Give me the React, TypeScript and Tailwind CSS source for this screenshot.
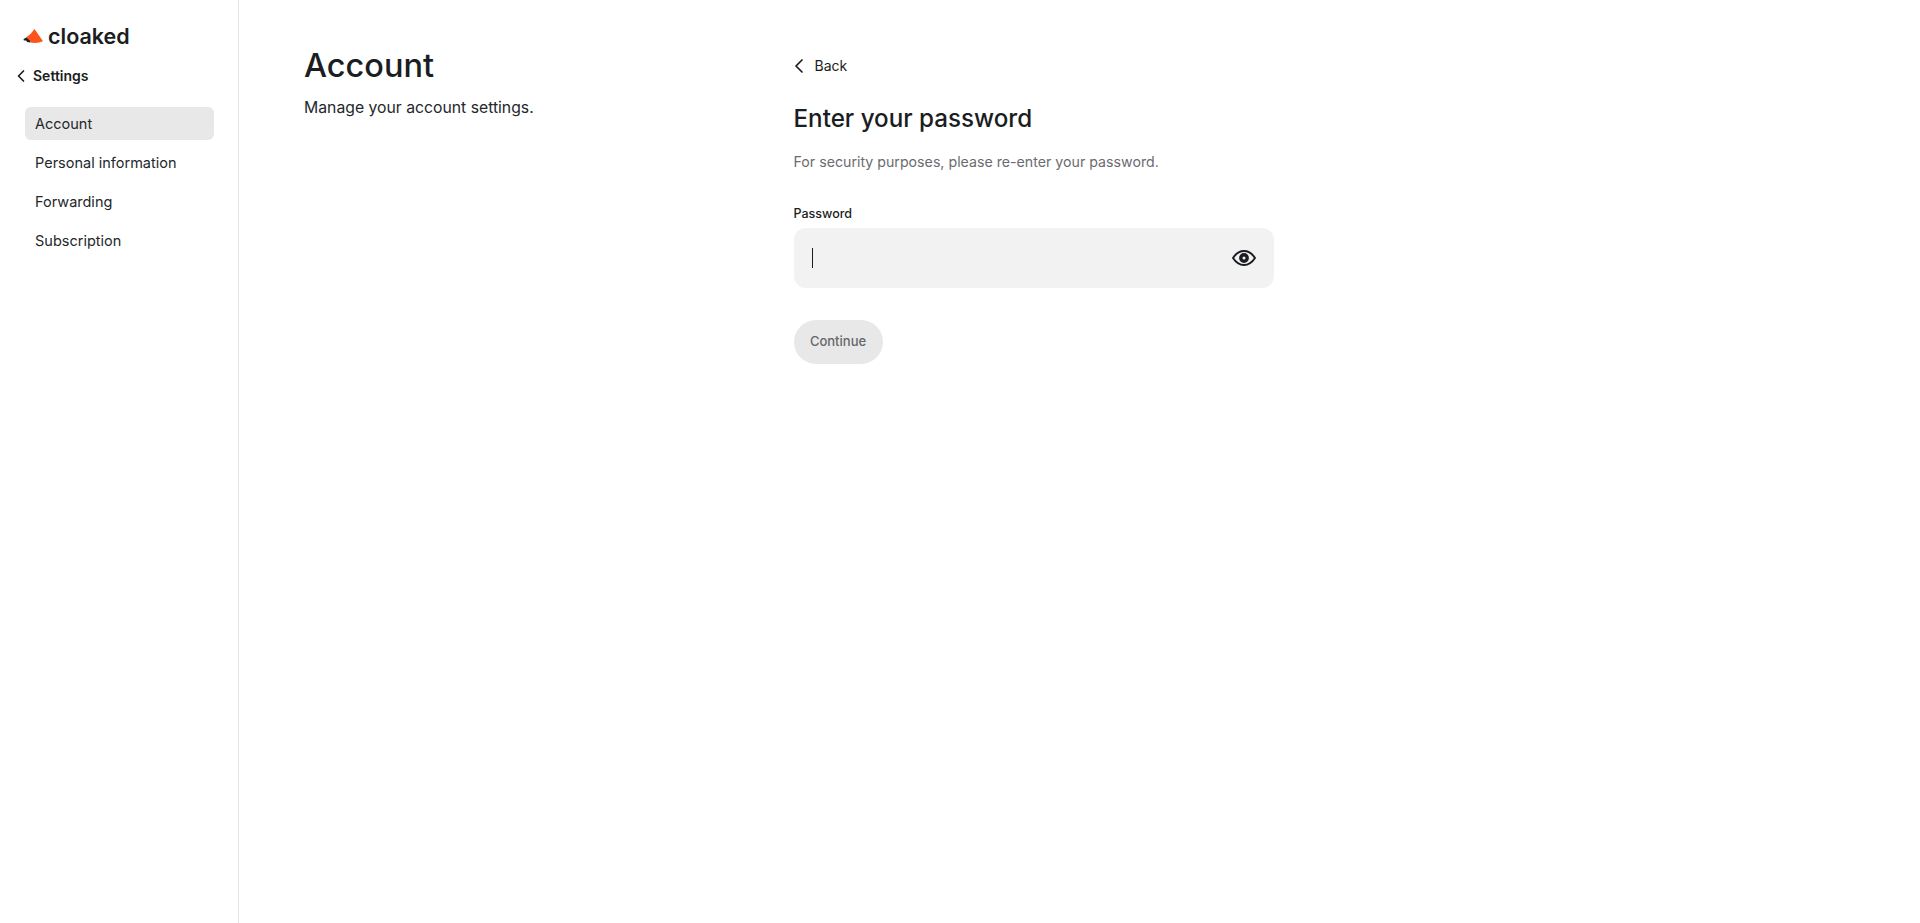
import { ChevronLeft } from 'lucide-react';

const navItems = ['Account', 'Personal information', 'Forwarding', 'Subscription'];

function Logo() {
  return (
    <div className="flex items-center gap-[4px] pl-[23px]">
      <svg width="21" height="16" viewBox="0 0 21 16">
        <path d="M11.5 1 L20 13.2 Q14 15.8 7.5 14.4 L6.6 12 L3 9.5 Q8 6.5 11.5 1 Z" fill="#ff5419" />
        <path d="M0.6 11 L3.4 9.6 L6.8 12.2 L7.4 14.4 L4 14 L3.2 12.4 L0.8 12.6 Z" fill="#1f2024" />
      </svg>
      <span className="text-[21.5px] leading-6 font-semibold text-[#1a1d21]">cloaked</span>
    </div>
  );
}

function Sidebar() {
  return (
    <aside className="w-[239px] shrink-0 border-r border-[#e6e6e6] pt-[24px]">
      <Logo />
      <div className="mt-[16px] flex items-center gap-[2px] pl-[11px]">
        <ChevronLeft size={20} strokeWidth={2} className="text-[#1a1d21]" />
        <span className="text-[14px] leading-6 font-semibold text-[#1a1d21]">Settings</span>
      </div>
      <nav className="mt-[19px] flex flex-col gap-[6px] pl-[25px] pr-[24px]">
        {navItems.map((item, i) => (
          <div
            key={item}
            className={`flex h-[33px] items-center rounded-[6px] px-[10px] text-[14.5px] text-[#24272b] ${i === 0 ? 'bg-[#e8e8e8]' : ''}`}
          >
            {item}
          </div>
        ))}
      </nav>
    </aside>
  );
}

function PasswordForm() {
  return (
    <div className="w-[480px]">
      <div className="flex items-center gap-[4px] pt-[16px] text-[#1a1d21]">
        <ChevronLeft size={24} strokeWidth={1.75} className="-ml-[7px]" />
        <span className="text-[14px] leading-6">Back</span>
      </div>
      <h2 className="mt-[25px] text-[24.2px] leading-8 font-medium text-[#1a1d21]">Enter your password</h2>
      <p className="mt-[15px] text-[14.2px] leading-6 text-[#6b6b70]">For security purposes, please re-enter your password.</p>
      <label className="mt-[30px] block text-[12.5px] leading-5 font-medium text-[#1a1d21]">Password</label>
      <div className="mt-[4px] flex h-[60px] items-center justify-between rounded-[12px] bg-[#f2f2f2] pl-[18px] pr-[18px]">
        <div className="h-[20px] w-px bg-[#1a1d21]" />
        <svg width="24" height="16" viewBox="0 0 24 16" fill="none">
          <path d="M1 8 C4 3.4 7.8 1 12 1 C16.2 1 20 3.4 23 8 C20 12.6 16.2 15 12 15 C7.8 15 4 12.6 1 8 Z" stroke="#1a1d21" strokeWidth="1.9" />
          <circle cx="12" cy="8" r="3.2" stroke="#1a1d21" strokeWidth="3.4" />
        </svg>
      </div>
      <button className="mt-[32px] flex h-[44px] w-[89px] items-center justify-center rounded-full bg-[#e8e8e8] text-[13px] font-medium text-[#66666b]">
        Continue
      </button>
    </div>
  );
}

export default function App() {
  return (
    <div className="flex h-[923px] bg-white font-['Inter',sans-serif]">
      <Sidebar />
      <main className="flex flex-1 pt-[38px] pl-[65px]">
        <div className="w-[489.5px] shrink-0">
          <h1 className="pt-[1px] text-[32.5px] leading-[54px] font-medium text-[#1a1d21]">Account</h1>
          <p className="mt-[3px] text-[15.75px] leading-6 text-[#24272b]">Manage your account settings.</p>
        </div>
        <PasswordForm />
      </main>
    </div>
  );
}
